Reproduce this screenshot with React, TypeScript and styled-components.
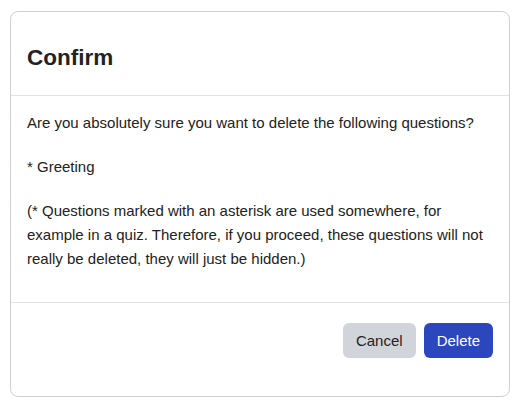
import React from 'react'
import styled, { createGlobalStyle } from 'styled-components'

const GlobalStyle = createGlobalStyle`
  html, body {
    margin: 0;
    padding: 0;
    background: #ffffff;
  }
  body {
    font-family: "Liberation Sans", Arial, sans-serif;
    color: #222222;
  }
`;

const App = () => {
  return (
    <>
      <GlobalStyle />
      <Page>
        <Dialog>
          <Header>
            <Title>Confirm</Title>
          </Header>
          <Body>
            <Paragraph>Are you absolutely sure you want to delete the following questions?</Paragraph>
            <Paragraph>* Greeting</Paragraph>
            <Paragraph>
              (* Questions marked with an asterisk are used somewhere, for example in a quiz.
              Therefore, if you proceed, these questions will not really be deleted, they will
              just be hidden.)
            </Paragraph>
          </Body>
          <Footer>
            <Button scheme="secondary">Cancel</Button>
            <Button scheme="primary">Delete</Button>
          </Footer>
        </Dialog>
      </Page>
    </>
  )
}

const Page = styled.div`
  padding: 11px 10px 10px 10px;
`;

const Dialog = styled.div`
  width: 500px;
  box-sizing: border-box;
  border: 1px solid #cfcfcf;
  border-radius: 8px;
  background: #ffffff;
  display: flex;
  flex-direction: column;
`;

const Header = styled.div`
  padding: 33px 16px 25px;
  border-bottom: 1px solid #e2e2e2;
`;

const Title = styled.h2`
  margin: 0;
  font-size: 22.5px;
  line-height: 25px;
  font-weight: 700;
  color: #222222;
`;

const Body = styled.div`
  padding: 15px 16px 31px;
  border-bottom: 1px solid #e2e2e2;
  display: flex;
  flex-direction: column;
  gap: 20px;
`;

const Paragraph = styled.p`
  margin: 0;
  font-size: 15px;
  line-height: 24px;
  color: #222222;
`;

const Footer = styled.div`
  padding: 20px 16px 38px;
  display: flex;
  justify-content: flex-end;
  gap: 8px;
`;

const Button = styled.button<{ scheme: 'primary' | 'secondary' }>`
  height: 35px;
  padding: 0 13px;
  border: none;
  border-radius: 6px;
  font-family: "Liberation Sans", Arial, sans-serif;
  font-size: 15px;
  cursor: pointer;
  background: ${({ scheme }) => (scheme === 'primary' ? '#2c46bd' : '#d1d5db')};
  color: ${({ scheme }) => (scheme === 'primary' ? '#ffffff' : '#222222')};
`;

export default App
